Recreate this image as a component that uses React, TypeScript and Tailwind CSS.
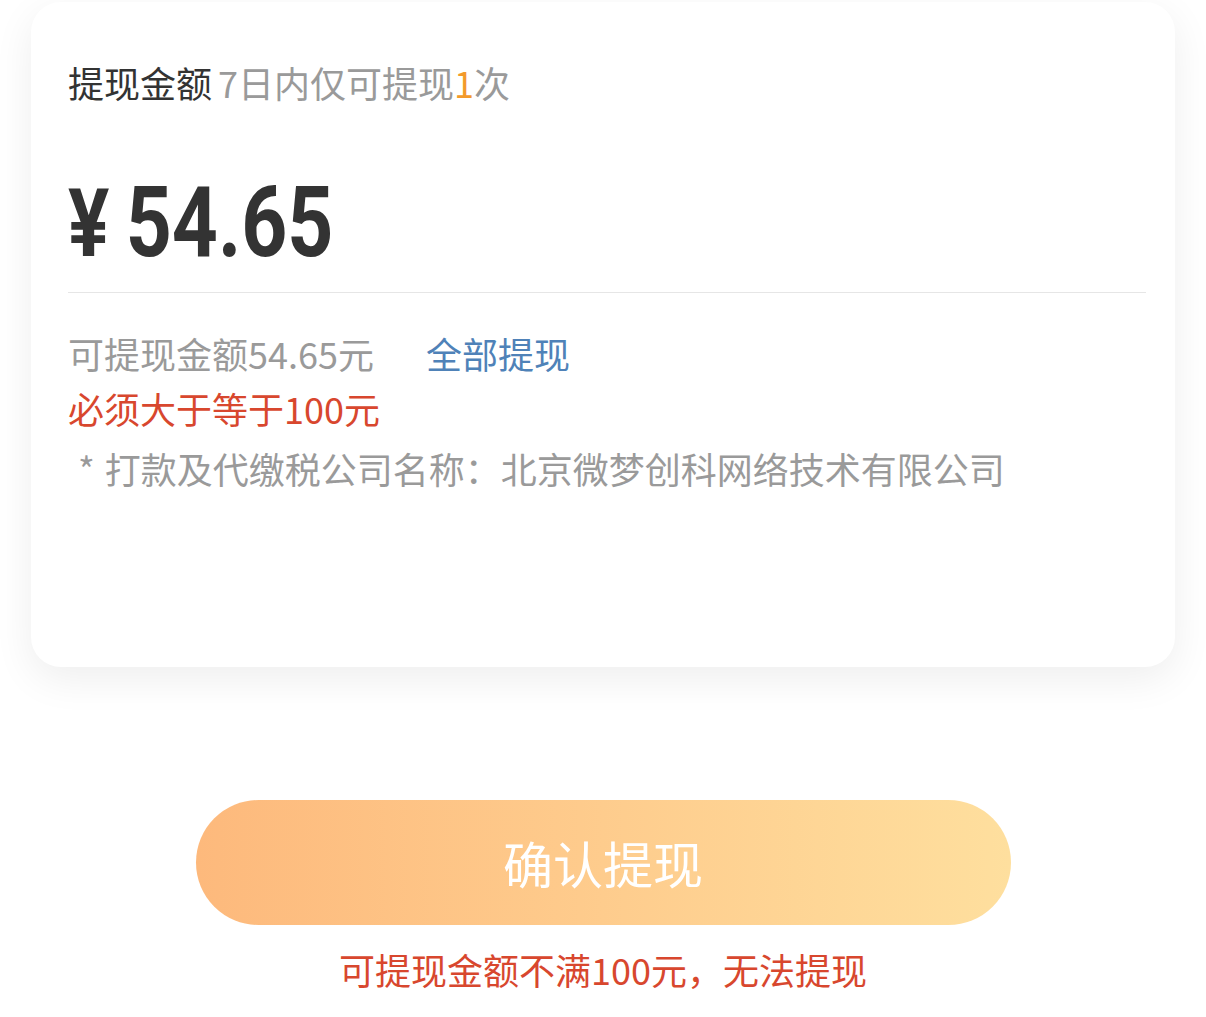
export default function App() {
  return (
    <div
      className="min-h-[1017px] w-[1206px] bg-white"
      style={{ fontFamily: '"Noto Sans CJK SC", "Noto Sans", sans-serif' }}
    >
      <div className="px-[31px] pt-[2px]">
        <div className="h-[665px] rounded-[30px] bg-white pl-[37px] pr-[29px] pt-[56px] shadow-[0_12px_40px_rgba(0,0,0,0.07)]">
          <p className="text-[36px] leading-[48px] text-[#333]">
            提现金额
            <span className="ml-[6px] text-[#9a9a9a]">
              7日内仅可提现<span className="text-[#f39a2b]">1</span>次
            </span>
          </p>

          <div className="mt-[68px] flex origin-left scale-x-[0.82] items-baseline gap-[20px] font-['Roboto',sans-serif] font-bold leading-none text-[#333]">
            <span className="text-[94px]">¥</span>
            <span className="text-[98px]">54.65</span>
          </div>

          <div className="mt-[20px] h-px bg-[#e6e6e6]" />

          <div className="mt-[36px] flex items-center gap-[52px] text-[36px] leading-[48px]">
            <span className="text-[#9a9a9a]">可提现金额54.65元</span>
            <span className="text-[#4f82b8]">全部提现</span>
          </div>
          <p className="mt-[7px] text-[36px] leading-[48px] text-[#d8472e]">必须大于等于100元</p>
          <p className="mt-[12px] text-[36px] leading-[48px] text-[#9a9a9a]">
            <span className="mx-[10px]">*</span>打款及代缴税公司名称：北京微梦创科网络技术有限公司
          </p>
        </div>
      </div>

      <div className="mt-[133px] flex justify-center">
        <button className="flex h-[125px] w-[815px] items-center justify-center rounded-full bg-gradient-to-r from-[#fdb97c] to-[#fedf9e] text-[50px] text-white">
          确认提现
        </button>
      </div>

      <p className="mt-[20px] text-center text-[36px] leading-[48px] text-[#d8472e]">
        可提现金额不满100元，无法提现
      </p>
    </div>
  );
}
